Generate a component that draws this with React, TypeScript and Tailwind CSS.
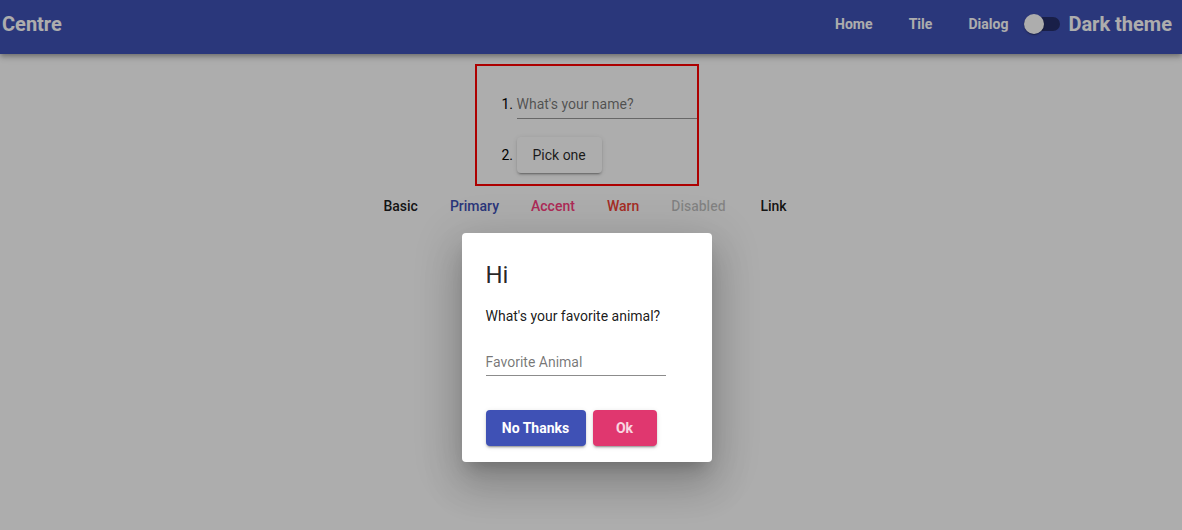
import React from "react";

function FlatBtn({ children, className = "" }: { children: React.ReactNode; className?: string }) {
  return (
    <button className={`h-9 min-w-16 px-4 text-[14px] leading-9 rounded ${className}`}>
      {children}
    </button>
  );
}

export default function App() {
  return (
    <div className="relative h-[530px] w-full overflow-hidden bg-white font-['Roboto',sans-serif] text-[14px]">
      <header className="relative z-0 flex h-[54px] items-center bg-[#3f51b5] pb-[6px] pl-[2px] pr-[10px] text-white shadow-[0_2px_4px_-1px_rgba(0,0,0,0.2),0_4px_5px_0_rgba(0,0,0,0.14),0_1px_10px_0_rgba(0,0,0,0.12)]">
        <span className="text-[20px] font-bold">Centre</span>
        <div className="flex-1" />
        <nav className="flex items-center">
          <FlatBtn className="font-bold">Home</FlatBtn>
          <FlatBtn className="font-bold">Tile</FlatBtn>
          <FlatBtn className="font-bold">Dialog</FlatBtn>
        </nav>
        <div className="flex items-center">
          <div className="relative h-[14px] w-9 rounded-full bg-[#262f6a]">
            <div className="absolute left-0 top-[-3px] h-5 w-5 rounded-full bg-white shadow-[0_2px_1px_-1px_rgba(0,0,0,0.2),0_1px_1px_0_rgba(0,0,0,0.14),0_1px_3px_0_rgba(0,0,0,0.12)]" />
          </div>
          <span className="ml-2 text-[20px] font-bold">Dark theme</span>
        </div>
      </header>

      <main className="flex flex-col items-center pr-[9px] pt-[10px]">
        <div className="border-2 border-[#ff0000]">
          <ol className="list-decimal pb-[11px] pl-10 pt-[28px] text-[14px] text-black">
            <li>
              <div className="w-[180px] border-b border-black/40 pb-[4px] leading-5 text-black/55">
                What's your name?
              </div>
            </li>
            <li className="mt-[18px]">
              <button className="h-9 min-w-16 rounded bg-white px-4 text-[14px] leading-9 text-black/85 shadow-[0_3px_1px_-2px_rgba(0,0,0,0.2),0_2px_2px_0_rgba(0,0,0,0.14),0_1px_5px_0_rgba(0,0,0,0.12)]">
                Pick one
              </button>
            </li>
          </ol>
        </div>
        <div className="mt-[2px] flex items-center">
          <FlatBtn className="font-medium text-black/90">Basic</FlatBtn>
          <FlatBtn className="font-medium text-[#3f51b5]">Primary</FlatBtn>
          <FlatBtn className="font-medium text-[#ff4081]">Accent</FlatBtn>
          <FlatBtn className="font-medium text-[#f44336]">Warn</FlatBtn>
          <FlatBtn className="font-medium text-black/25">Disabled</FlatBtn>
          <FlatBtn className="font-medium text-black/90">Link</FlatBtn>
        </div>
      </main>

      <div className="absolute inset-0 bg-black/[0.32]" />

      <div className="absolute inset-0 flex justify-center pr-[9px] pt-[233px]">
        <div className="h-[229px] w-[250px] rounded bg-white px-6 pb-4 pt-[26px] shadow-[0_11px_15px_-7px_rgba(0,0,0,0.2),0_24px_38px_3px_rgba(0,0,0,0.14),0_9px_46px_8px_rgba(0,0,0,0.12)]">
          <h2 className="text-[24px] leading-8 text-black/85">Hi</h2>
          <p className="mt-[15px] leading-5 text-black/90">What's your favorite animal?</p>
          <div className="mt-[26px] w-[180px] border-b border-black/45 pb-[3px] leading-5 text-black/55">
            Favorite Animal
          </div>
          <div className="mt-[34px] flex gap-[7px]">
            <button className="h-9 w-[100px] rounded bg-[#3f51b5] text-[14px] font-bold text-white shadow-[0_3px_1px_-2px_rgba(0,0,0,0.2),0_2px_2px_0_rgba(0,0,0,0.14),0_1px_5px_0_rgba(0,0,0,0.12)]">
              No Thanks
            </button>
            <button className="h-9 w-16 rounded bg-[#e0376f] text-[14px] font-bold text-white/80 shadow-[0_3px_1px_-2px_rgba(0,0,0,0.2),0_2px_2px_0_rgba(0,0,0,0.14),0_1px_5px_0_rgba(0,0,0,0.12)]">
              Ok
            </button>
          </div>
        </div>
      </div>
    </div>
  );
}
